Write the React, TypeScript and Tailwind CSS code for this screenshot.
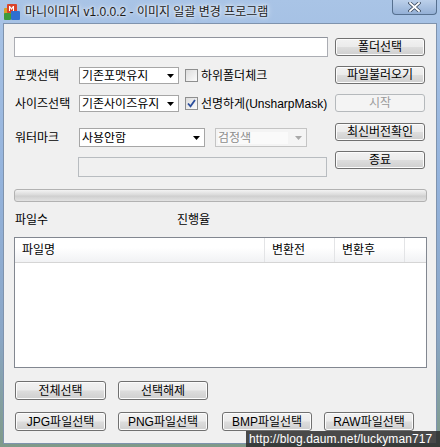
import React from "react"

const font = { fontFamily: '"Liberation Sans", "Noto Sans CJK KR", sans-serif' }

// Win7 style push button
function Btn({ label, w, disabled }: { label: string; w: string; disabled?: boolean }) {
    if (disabled) {
        return (
            <div className={`${w} h-[18px] shrink-0 rounded-[3px] border border-[#b5b9bc] bg-[#f4f4f4] flex items-center justify-center text-[12px] leading-none text-[#9a9a9a]`}>
                {label}
            </div>
        )
    }
    return (
        <div className={`${w} h-[18px] shrink-0 rounded-[3px] border border-[#707070] bg-[linear-gradient(#f2f2f2_0%,#ebebeb_48%,#dddddd_52%,#cfcfcf_100%)] shadow-[inset_0_0_0_1px_#fcfcfc] flex items-center justify-center text-[12px] leading-none text-black`}>
            {label}
        </div>
    )
}

function Arrow({ gray }: { gray?: boolean }) {
    return (
        <svg width="7" height="4" viewBox="0 0 7 4" className="shrink-0">
            <path d="M0 0h7L3.5 4z" fill={gray ? "#a8a8a8" : "#000"} />
        </svg>
    )
}

function Combo({ text, w, textW, disabled }: { text: string; w: string; textW: string; disabled?: boolean }) {
    return (
        <div className={`${w} h-full shrink-0 border ${disabled ? "border-[#c4c4c4] bg-[#f4f4f4] text-[#8d8d8d]" : "border-[#a6a6a6] bg-white text-black"} flex items-center pl-[2px] pr-[4px] text-[12px] leading-none`}>
            <div className={`${textW} overflow-hidden whitespace-nowrap ${disabled ? "bg-[#fafafa]" : ""}`}>{text}</div>
            <div className="flex-1" />
            <Arrow gray={disabled} />
        </div>
    )
}

function Check({ checked, label }: { checked?: boolean; label: string }) {
    return (
        <div className="flex items-center gap-[3px] ml-[6px]">
            <div className="w-[13px] h-[13px] border border-[#8e8f8f] bg-[linear-gradient(135deg,#dcdcdc,#fbfbfb)] flex items-center justify-center">
                {checked && (
                    <svg width="9" height="9" viewBox="0 0 9 9">
                        <path d="M1 4.5l2.5 2.8L8 1" stroke="#2a4d9c" strokeWidth="1.8" fill="none" />
                    </svg>
                )}
            </div>
            <span className="text-[12px] leading-none whitespace-nowrap">{label}</span>
        </div>
    )
}

function AppIcon() {
    return (
        <svg width="18" height="18" viewBox="0 0 18 18">
            <rect x="1" y="5" width="9" height="10" rx="1" fill="#d8a028" />
            <rect x="4" y="1" width="10" height="9" rx="1" fill="#d9432b" />
            <rect x="8" y="8" width="9" height="9" rx="1" fill="#2f6fd0" />
            <rect x="1" y="10" width="7" height="7" rx="1" fill="#3c9a3c" />
            <path d="M6 3h1l1.5 2 1.5-2h1v5h-1V5l-1.5 2L7 5v3H6z" fill="#fff" />
        </svg>
    )
}

export default function App() {
    return (
        <div className="relative w-[440px] h-[447px] overflow-hidden bg-[linear-gradient(#a9c4e6_0%,#94b3dc_40%,#8aa6c6_75%,#7f9a88_100%)]" style={font}>
            {/* title bar */}
            <div className="h-[23px] flex items-center pl-[3px] relative">
                <AppIcon />
                <span className="ml-[4px] text-[12px] leading-none text-[#1b1b1b] [text-shadow:0_0_6px_#ffffff,0_0_3px_#ffffff]">
                    마니이미지 v1.0.0.2 - 이미지 일괄 변경 프로그램
                </span>
                <div className="absolute right-[3px] top-0 w-[45px] h-[15px] rounded-b-[4px] border border-t-0 border-[#56708f] bg-[linear-gradient(#bcd0ea,#94b0d6)] flex items-center justify-center">
                    <svg width="13" height="10" viewBox="0 0 13 10">
                        <path d="M2 1l9 8M11 1l-9 8" stroke="#3a4a60" strokeWidth="3.4" strokeLinecap="square" />
                        <path d="M2 1l9 8M11 1l-9 8" stroke="#ffffff" strokeWidth="1.8" strokeLinecap="square" />
                    </svg>
                </div>
            </div>

            {/* client area */}
            <div className="mx-[3px] h-[421px] border border-[#7f93ad] bg-[#f0f0f0] pl-[10px] pt-[13px] text-black">
                <div className="flex gap-[7px]">
                    {/* left column */}
                    <div className="w-[314px] flex flex-col">
                        <div className="h-[20px] border border-[#abadb3] border-t-[#8f939c] bg-white" />
                        <div className="mt-[10px] h-[17px] flex items-center">
                            <span className="w-[65px] pl-[1px] text-[12px] leading-none">포맷선택</span>
                            <Combo text="기존포맷유지" w="w-[100px]" textW="w-[80px]" />
                            <Check label="하위폴더체크" />
                        </div>
                        <div className="mt-[11px] h-[17px] flex items-center">
                            <span className="w-[65px] pl-[1px] text-[12px] leading-none">사이즈선택</span>
                            <Combo text="기존사이즈유지" w="w-[100px]" textW="w-[79px]" />
                            <Check checked label="선명하게(UnsharpMask)" />
                        </div>
                        <div className="mt-[16px] h-[19px] flex items-center">
                            <span className="w-[65px] pl-[1px] text-[12px] leading-none">워터마크</span>
                            <Combo text="사용안함" w="w-[126px]" textW="w-[80px]" />
                            <div className="w-[10px] shrink-0" />
                            <Combo text="검정색" w="w-[92px]" textW="w-[70px]" disabled />
                        </div>
                        <div className="mt-[10px] ml-[64px] w-[249px] h-[20px] border border-[#b8bcc0] bg-[#f0f0f0]" />
                    </div>
                    {/* right column */}
                    <div className="w-[90px] pt-[1px] flex flex-col">
                        <Btn label="폴더선택" w="w-[90px]" />
                        <div className="mt-[10px]"><Btn label="파일불러오기" w="w-[90px]" /></div>
                        <div className="mt-[10px]"><Btn label="시작" w="w-[90px]" disabled /></div>
                        <div className="mt-[11px]"><Btn label="최신버전확인" w="w-[90px]" /></div>
                        <div className="mt-[10px]"><Btn label="종료" w="w-[90px]" /></div>
                    </div>
                </div>

                {/* progress bar */}
                <div className="mt-[12px] w-[413px] h-[13px] rounded-[3px] border border-[#b2b2b2] bg-[linear-gradient(#f3f3f3_0%,#dadada_45%,#cfcfcf_55%,#e2e2e2_100%)]" />

                <div className="mt-[10px] h-[16px] flex items-center text-[12px] leading-none">
                    <span className="w-[163px] pl-[1px]">파일수</span>
                    <span>진행율</span>
                </div>

                {/* list view */}
                <div className="mt-[9px] w-[413px] h-[131px] border border-[#828790] bg-white">
                    <div className="h-[25px] flex border-b border-[#d5d5d5] bg-[linear-gradient(#ffffff_0%,#ffffff_40%,#f1f2f4_100%)] text-[12px] leading-none">
                        <div className="w-[250px] flex items-center px-[7px] border-r border-[#e3e4e6]">파일명</div>
                        <div className="w-[70px] flex items-center px-[7px] border-r border-[#e3e4e6]">변환전</div>
                        <div className="w-[70px] flex items-center px-[7px] border-r border-[#e3e4e6]">변환후</div>
                        <div className="flex-1" />
                    </div>
                </div>

                {/* select buttons */}
                <div className="mt-[13px] ml-[1px] flex gap-[12px]">
                    <Btn label="전체선택" w="w-[91px] !h-[19px]" />
                    <Btn label="선택해제" w="w-[90px] !h-[19px]" />
                </div>
                <div className="mt-[12px] ml-[1px] flex">
                    <Btn label="JPG파일선택" w="w-[91px] !h-[19px]" />
                    <div className="w-[12px]" />
                    <Btn label="PNG파일선택" w="w-[90px] !h-[19px]" />
                    <div className="w-[14px]" />
                    <Btn label="BMP파일선택" w="w-[90px] !h-[19px]" />
                    <div className="w-[12px]" />
                    <Btn label="RAW파일선택" w="w-[90px] !h-[19px]" />
                </div>
            </div>

            {/* blog watermark overlay */}
            <div className="absolute right-0 bottom-0 w-[194px] h-[16px] bg-[#2b2b2b]/85 flex items-center pl-[3px] text-[12px] leading-none text-white tracking-[0.1px]">
                http://blog.daum.net/luckyman717
            </div>
        </div>
    )
}
